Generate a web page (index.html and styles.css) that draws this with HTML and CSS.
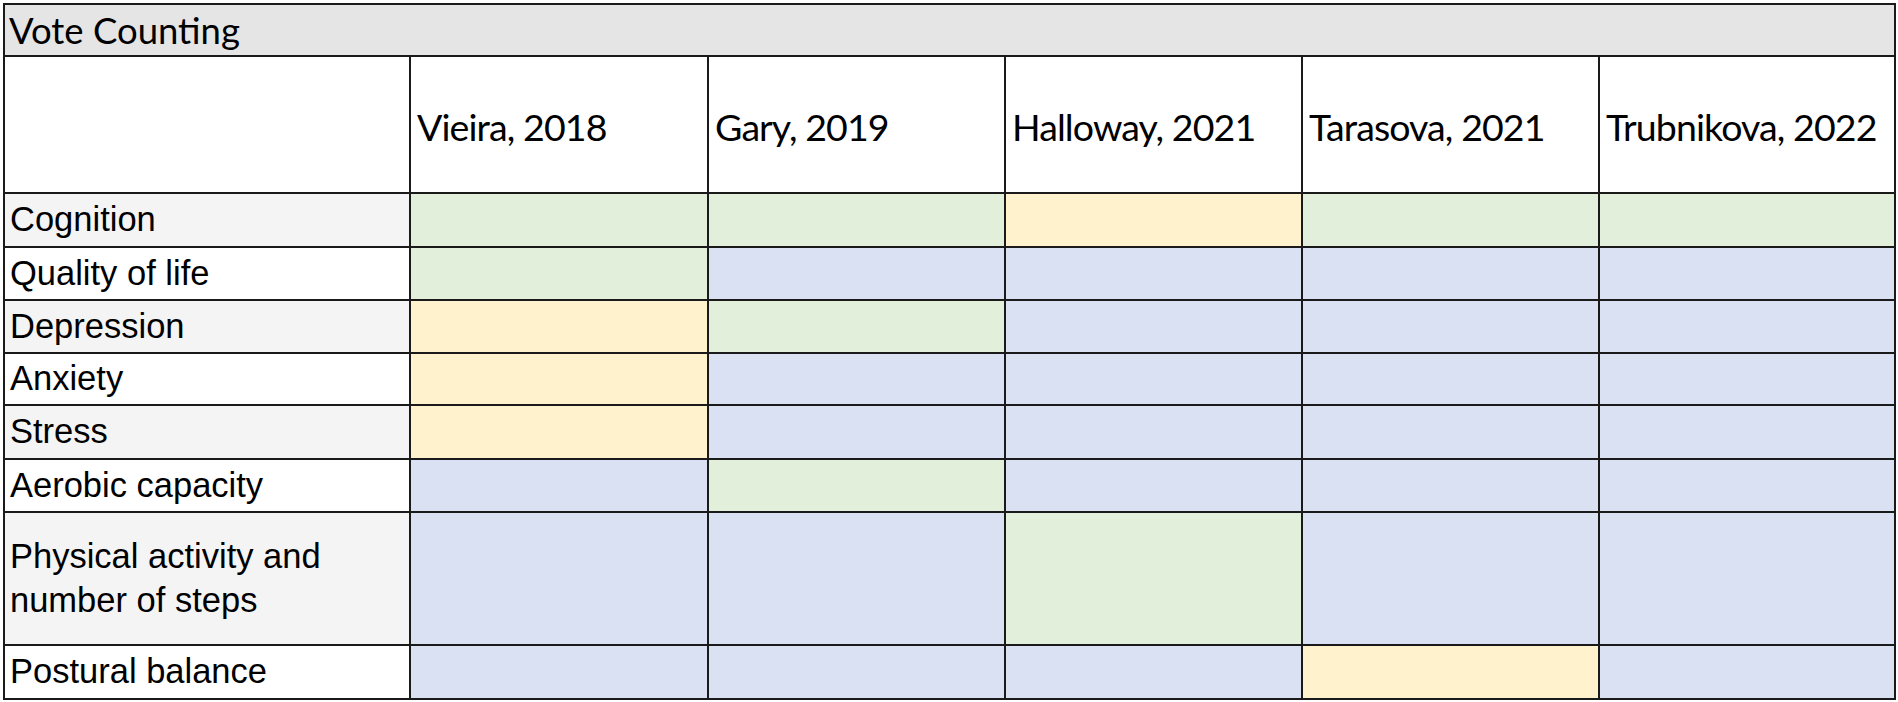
FILE: index.html
```html
<!DOCTYPE html>
<html lang="en">
<head>
<meta charset="utf-8">
<title>Vote Counting</title>
<link rel="stylesheet" href="styles.css">
</head>
<body>
<div class="sheet">
  <div class="cell title">Vote Counting</div>

  <div class="cell head blank"></div>
  <div class="cell head">Vieira, 2018</div>
  <div class="cell head">Gary, 2019</div>
  <div class="cell head">Halloway, 2021</div>
  <div class="cell head">Tarasova, 2021</div>
  <div class="cell head">Trubnikova, 2022</div>

  <div class="cell label shade">Cognition</div>
  <div class="cell green"></div>
  <div class="cell green"></div>
  <div class="cell yellow"></div>
  <div class="cell green"></div>
  <div class="cell green"></div>

  <div class="cell label">Quality of life</div>
  <div class="cell green"></div>
  <div class="cell blue"></div>
  <div class="cell blue"></div>
  <div class="cell blue"></div>
  <div class="cell blue"></div>

  <div class="cell label shade">Depression</div>
  <div class="cell yellow"></div>
  <div class="cell green"></div>
  <div class="cell blue"></div>
  <div class="cell blue"></div>
  <div class="cell blue"></div>

  <div class="cell label">Anxiety</div>
  <div class="cell yellow"></div>
  <div class="cell blue"></div>
  <div class="cell blue"></div>
  <div class="cell blue"></div>
  <div class="cell blue"></div>

  <div class="cell label shade">Stress</div>
  <div class="cell yellow"></div>
  <div class="cell blue"></div>
  <div class="cell blue"></div>
  <div class="cell blue"></div>
  <div class="cell blue"></div>

  <div class="cell label">Aerobic capacity</div>
  <div class="cell blue"></div>
  <div class="cell green"></div>
  <div class="cell blue"></div>
  <div class="cell blue"></div>
  <div class="cell blue"></div>

  <div class="cell label shade">Physical activity and<br>number of steps</div>
  <div class="cell blue"></div>
  <div class="cell blue"></div>
  <div class="cell green"></div>
  <div class="cell blue"></div>
  <div class="cell blue"></div>

  <div class="cell label">Postural balance</div>
  <div class="cell blue"></div>
  <div class="cell blue"></div>
  <div class="cell blue"></div>
  <div class="cell yellow"></div>
  <div class="cell blue"></div>
</div>
</body>
</html>
```

FILE: styles.css
```css
html, body {
  margin: 0;
  padding: 0;
  background: #ffffff;
}

.sheet {
  margin: 3px 0 0 3px;
  width: 1893px;
  box-sizing: border-box;
  display: grid;
  grid-template-columns: 404px 296px 295px 295px 295px 294px;
  grid-template-rows: 50px 135px 52px 51px 51px 50px 52px 51px 131px 52px;
  gap: 2px;
  padding: 2px;
  background: #1a1a1a;
}

.cell {
  background: #ffffff;
  display: flex;
  align-items: center;
  color: #000000;
}

.title {
  grid-column: 1 / -1;
  background: #e5e5e5;
  font-family: "Lato", "Liberation Sans", sans-serif;
  font-size: 36.5px;
  padding-left: 4px;
}

.head {
  font-family: "Lato", "Liberation Sans", sans-serif;
  font-size: 37.5px;
  letter-spacing: -0.9px;
  padding-left: 6px;
  padding-top: 3px;
  box-sizing: border-box;
}

.label {
  font-family: "Liberation Sans", Arial, sans-serif;
  font-size: 34.5px;
  line-height: 43.6px;
  padding-left: 5px;
}

.shade {
  background: #f4f4f4;
}

.green {
  background: #e2efda;
}

.yellow {
  background: #fff2cc;
}

.blue {
  background: #d9e1f2;
}
```
